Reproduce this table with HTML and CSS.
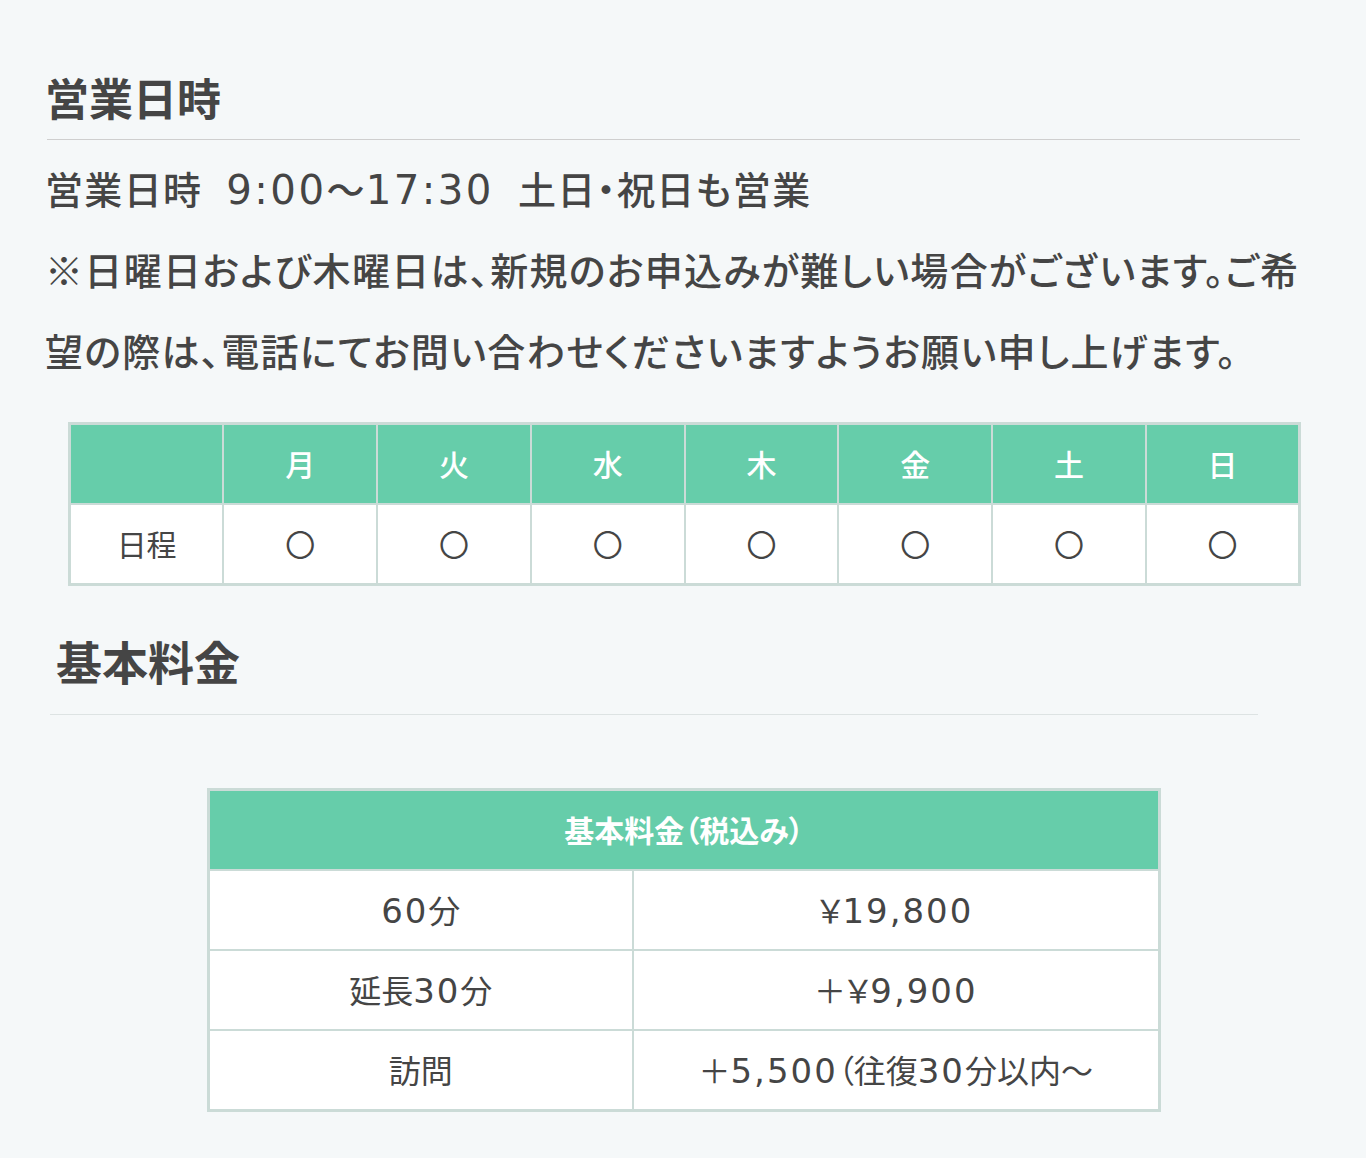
FILE: index.html
```html
<!DOCTYPE html>
<html lang="ja">
<head>
<meta charset="utf-8">
<title>営業日時</title>
<link rel="stylesheet" href="styles.css">
</head>
<body>
<main class="page">
  <section class="hours">
    <h2 class="section-title">営業日時</h2>
    <p class="hours-text"><span class="hours-line">営業日時<span class="gap"></span><span class="lat">9:00</span>～<span class="lat">17:30</span><span class="gap"></span>土日・祝日も営業</span>※日曜日および木曜日は、新規のお申込みが難しい場合がございます。ご希望の際は、電話にてお問い合わせくださいますようお願い申し上げます。</p>
    <table class="week">
      <thead>
        <tr><th></th><th>月</th><th>火</th><th>水</th><th>木</th><th>金</th><th>土</th><th>日</th></tr>
      </thead>
      <tbody>
        <tr><td>日程</td><td>〇</td><td>〇</td><td>〇</td><td>〇</td><td>〇</td><td>〇</td><td>〇</td></tr>
      </tbody>
    </table>
  </section>
  <section class="price">
    <h2 class="section-title price-title">基本料金</h2>
    <table class="fees">
      <colgroup><col class="fee-col-name"><col class="fee-col-value"></colgroup>
      <thead>
        <tr><th colspan="2">基本料金（税込み）</th></tr>
      </thead>
      <tbody>
        <tr><td><span class="lat">60</span>分</td><td>￥<span class="lat">19,800</span></td></tr>
        <tr><td>延長<span class="lat">30</span>分</td><td>＋￥<span class="lat">9,900</span></td></tr>
        <tr><td>訪問</td><td>＋<span class="lat">5,500</span>（往復<span class="lat">30</span>分以内～</td></tr>
      </tbody>
    </table>
  </section>
</main>
</body>
</html>
```

FILE: styles.css
```css
html, body {
  margin: 0;
  padding: 0;
  background: #f5f8f9;
}

body {
  font-family: "Noto Sans CJK JP", "Noto Sans", sans-serif;
  color: #454545;
  font-feature-settings: "palt";
}

.page {
  width: 1253px;
  margin-left: 47px;
  padding-top: 67px;
  padding-bottom: 50px;
}

.lat {
  font-family: "DejaVu Sans", "Noto Sans CJK JP", sans-serif;
  font-size: 1.06em;
  letter-spacing: 0.06em;
  line-height: 1;
}

.section-title {
  margin: 0;
  font-size: 44px;
  font-weight: 700;
  line-height: 60px;
  color: #454545;
  padding-bottom: 12px;
  border-bottom: 1px solid #cfcfcf;
  text-indent: -2px;
}

.hours-text {
  margin: 7px 0 0 -2px;
  width: 1262px;
  font-size: 38px;
  font-weight: 500;
  line-height: 81px;
  letter-spacing: 0.035em;
}

.hours-line {
  display: block;
}

.gap {
  display: inline-block;
  width: 24px;
}

.week {
  margin: 32px 0 0 21px;
  width: 1233px;
  border-collapse: collapse;
  table-layout: fixed;
  border: 3px solid #cbdbd7;
}

.week th,
.week td {
  height: 75px;
  border: 2px solid #cbdbd7;
  text-align: center;
  padding: 0 0 3px;
  font-size: 30px;
}

.week th {
  background: #66cdaa;
  color: #ffffff;
  font-weight: 500;
}

.week td {
  background: #ffffff;
  font-weight: 400;
}

.price-title {
  margin: 44px 0 0 3px;
  width: 1202px;
  padding-left: 6px;
  padding-bottom: 24px;
  font-size: 46px;
  text-indent: 0;
  border-bottom-color: #dde3e3;
}

.fees {
  margin: 73px 0 0 160px;
  width: 954px;
  border-collapse: collapse;
  table-layout: fixed;
  border: 3px solid #cbdbd7;
}

.fee-col-name {
  width: 424px;
}

.fees th,
.fees td {
  height: 75px;
  border: 2px solid #cbdbd7;
  text-align: center;
  padding: 0 0 3px;
  font-size: 32px;
  font-weight: 400;
  background: #ffffff;
}

.fees th {
  background: #66cdaa;
  color: #ffffff;
  font-size: 30px;
  font-weight: 700;
}
```
